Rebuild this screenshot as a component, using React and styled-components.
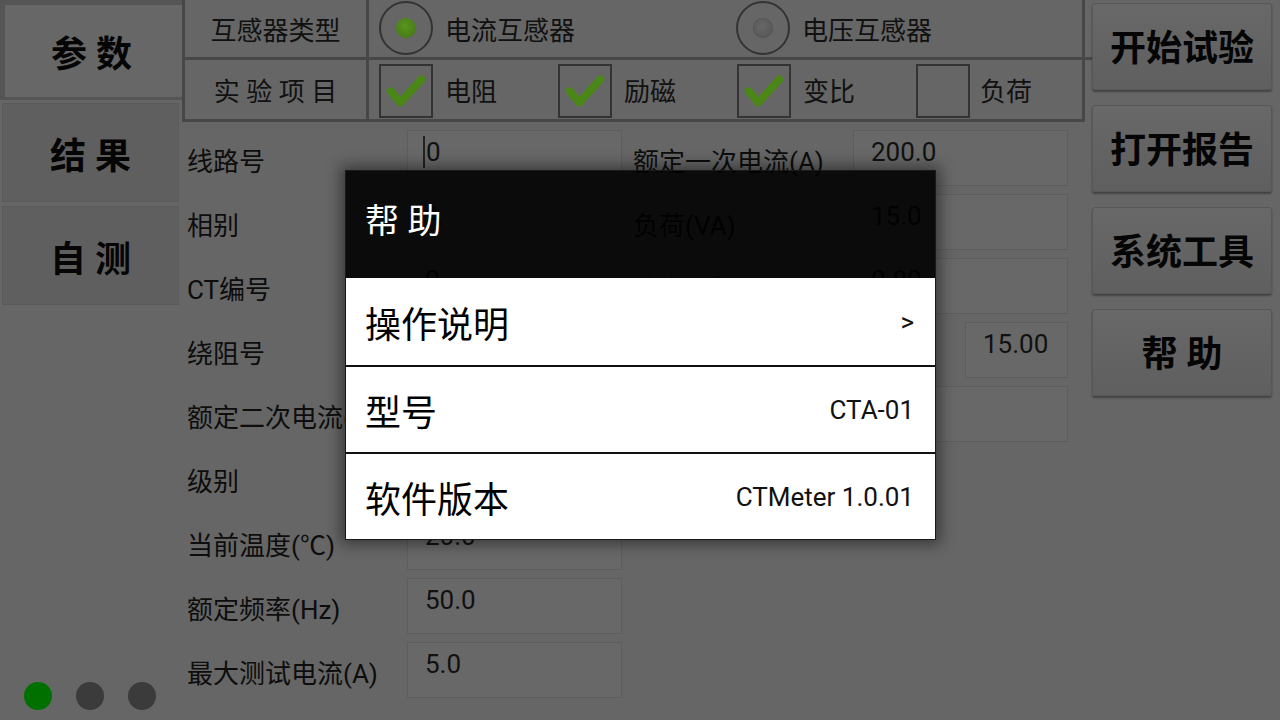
import React from "react";
import styled, { createGlobalStyle } from "styled-components";

const Global = createGlobalStyle`
  html, body { margin: 0; padding: 0; background: #666; }
  body { font-family: Roboto, "Noto Sans CJK SC", sans-serif; }
  * { box-sizing: border-box; }
`;

const Page = styled.div`
  position: relative;
  width: 1280px;
  height: 720px;
  background: #666;
  display: flex;
  overflow: hidden;
  color: #0d0d0d;
`;

const LeftCol = styled.div`
  width: 182px;
  flex: none;
  display: flex;
  flex-direction: column;
`;

const Tab = styled.div`
  display: flex;
  align-items: center;
  justify-content: center;
  font-size: 36px;
  font-weight: 700;
  color: #050505;
  ${(p) =>
    p.$active
      ? `height: 100px; background: #676767; border-top: 5px solid #555; border-left: 5px solid #555; border-bottom: 3px solid #555; padding-right: 4px;`
      : `height: 99px; margin: 3px 3px 1px 2px; background: #5f5f5f; border: 1px solid #5a5a5a;`}
`;

const Dots = styled.div`
  margin-top: auto;
  display: flex;
  gap: 24px;
  padding: 0 0 10px 24px;
`;

const Dot = styled.span`
  width: 28px;
  height: 28px;
  border-radius: 50%;
  background: ${(p) => (p.$on ? "#007000" : "#3b3b3b")};
`;

const Middle = styled.div`
  width: 903px;
  flex: none;
  display: flex;
  flex-direction: column;
`;

const Table = styled.div`
  display: grid;
  grid-template-columns: 184px 1fr;
  grid-template-rows: 60px 59px;
  border-left: 3px solid #474747;
  border-right: 3px solid #474747;
  border-bottom: 3px solid #474747;
`;

const HeadCell = styled.div`
  display: flex;
  align-items: center;
  justify-content: center;
  font-size: 26px;
  color: #111;
  border-right: 3px solid #474747;
  ${(p) => (p.$top ? "border-bottom: 3px solid #474747;" : "")}
`;

const Options = styled.div`
  display: grid;
  grid-template-columns: repeat(${(p) => p.$cols}, ${(p) => p.$w}px);
  align-items: center;
  padding-left: 10px;
  ${(p) => (p.$top ? "border-bottom: 3px solid #474747;" : "")}
`;

const Option = styled.div`
  display: flex;
  align-items: center;
  gap: ${(p) => p.$gap || 12}px;
  font-size: 26px;
  color: #111;
`;

const RadioRing = styled.span`
  width: 54px;
  height: 54px;
  border-radius: 50%;
  border: 2px solid #333;
  display: flex;
  align-items: center;
  justify-content: center;
  margin-top: -1px;
`;

const RadioDot = styled.span`
  width: 20px;
  height: 20px;
  border-radius: 50%;
  background: ${(p) =>
    p.$on
      ? "radial-gradient(circle at 45% 40%, #5a9420, #3f7412)"
      : "radial-gradient(circle at 45% 40%, #666, #555)"};
  ${(p) => (p.$on ? "" : "box-shadow: inset 0 0 2px #4a4a4a;")}
`;

const Box = styled.span`
  width: 54px;
  height: 54px;
  border: 2px solid #333;
  display: flex;
  align-items: center;
  justify-content: center;
  margin-top: 2px;
`;

const Form = styled.div`
  display: grid;
  grid-template-columns: 446px 446px;
  padding: 8px 0 0 5px;
`;

const FormCol = styled.div`
  display: flex;
  flex-direction: column;
  gap: 8px;
`;

const Row = styled.div`
  display: flex;
  height: 56px;
  width: 435px;
`;

const Label = styled.div`
  width: 220px;
  flex: none;
  display: flex;
  align-items: center;
  padding-top: 2px;
  font-size: 26px;
  color: #0d0d0d;
  white-space: nowrap;
`;

const Input = styled.div`
  flex: ${(p) => (p.$narrow ? "none" : "1")};
  width: ${(p) => (p.$narrow ? "103px" : "auto")};
  margin-left: ${(p) => (p.$narrow ? "auto" : "0")};
  background: #686868;
  border: 1px solid #5d5d5d;
  padding: 3px 0 0 17px;
  font-size: 26px;
  line-height: 36px;
  color: #111;
  display: flex;
  align-items: flex-start;
`;

const Caret = styled.span`
  display: inline-block;
  width: 2px;
  height: 32px;
  background: #222;
  margin: 2px 1px 0 -2px;
`;

const RightCol = styled.div`
  flex: 1;
  display: flex;
  flex-direction: column;
  gap: 15px;
  padding: 3px 8px 0 7px;
`;

const SideButton = styled.div`
  height: 87px;
  border-radius: 3px;
  background: linear-gradient(#686868, #5f5f5f);
  border: 1px solid #575757;
  box-shadow: 0 2px 2px rgba(0, 0, 0, 0.35);
  display: flex;
  align-items: center;
  justify-content: center;
  padding-bottom: 3px;
  font-size: 36px;
  font-weight: 700;
  color: #050505;
`;

const Dialog = styled.div`
  position: absolute;
  left: 345px;
  top: 170px;
  width: 591px;
  display: flex;
  flex-direction: column;
  box-shadow: 0 0 14px 4px rgba(0, 0, 0, 0.45);
  border: 1px solid #1a1a1a;
`;

const DialogHead = styled.div`
  height: 107px;
  background: rgba(0, 0, 0, 0.89);
  color: #fff;
  font-size: 34px;
  display: flex;
  align-items: center;
  padding: 0 0 12px 19px;
`;

const Item = styled.div`
  height: 87px;
  background: #fff;
  display: flex;
  align-items: center;
  justify-content: space-between;
  padding: 0 21px 0 19px;
  ${(p) => (p.$sep ? "border-top: 2px solid #111;" : "")}
`;

const ItemLabel = styled.span`
  font-size: 36px;
  color: #000;
`;

const ItemValue = styled.span`
  font-size: 26px;
  color: #111;
`;

const Check = () => (
  <svg width="54" height="54" viewBox="0 0 54 54" style={{ marginLeft: -2 }}>
    <polyline
      points="12,27 22,39 44,15"
      fill="none"
      stroke="#4b8717"
      strokeWidth="8"
      strokeLinecap="round"
      strokeLinejoin="round"
    />
  </svg>
);

const leftRows = [
  ["线路号", "0", true],
  ["相别", "A"],
  ["CT编号", "0"],
  ["绕阻号", "1"],
  ["额定二次电流(A)", "5"],
  ["级别", "0.2"],
  ["当前温度(℃)", "20.0"],
  ["额定频率(Hz)", "50.0"],
  ["最大测试电流(A)", "5.0"],
];

const rightRows = [
  ["额定一次电流(A)", "200.0"],
  ["负荷(VA)", "15.0"],
  ["功率因数", "0.80"],
  ["二次绕组电阻(Ω)", "15.00", true],
  ["备注", ""],
];

export default function App() {
  return (
    <>
      <Global />
      <Page>
        <LeftCol>
          <Tab $active>参 数</Tab>
          <Tab>结 果</Tab>
          <Tab>自 测</Tab>
          <Dots>
            <Dot $on />
            <Dot />
            <Dot />
          </Dots>
        </LeftCol>
        <Middle>
          <Table>
            <HeadCell $top>互感器类型</HeadCell>
            <Options $top $cols={2} $w={357}>
              <Option>
                <RadioRing>
                  <RadioDot $on />
                </RadioRing>
                电流互感器
              </Option>
              <Option>
                <RadioRing>
                  <RadioDot />
                </RadioRing>
                电压互感器
              </Option>
            </Options>
            <HeadCell>实 验 项 目</HeadCell>
            <Options $cols={4} $w={179}>
              <Option>
                <Box>
                  <Check />
                </Box>
                电阻
              </Option>
              <Option>
                <Box>
                  <Check />
                </Box>
                励磁
              </Option>
              <Option>
                <Box>
                  <Check />
                </Box>
                变比
              </Option>
              <Option $gap={10}>
                <Box />
                负荷
              </Option>
            </Options>
          </Table>
          <Form>
            <FormCol>
              {leftRows.map(([l, v, caret]) => (
                <Row key={l}>
                  <Label>{l}</Label>
                  <Input>
                    {caret && <Caret />}
                    {v}
                  </Input>
                </Row>
              ))}
            </FormCol>
            <FormCol>
              {rightRows.map(([l, v, narrow]) => (
                <Row key={l}>
                  <Label>{l}</Label>
                  <Input $narrow={narrow}>{v}</Input>
                </Row>
              ))}
            </FormCol>
          </Form>
        </Middle>
        <RightCol>
          <SideButton>开始试验</SideButton>
          <SideButton>打开报告</SideButton>
          <SideButton>系统工具</SideButton>
          <SideButton>帮 助</SideButton>
        </RightCol>
        <Dialog>
          <DialogHead>帮 助</DialogHead>
          <Item>
            <ItemLabel>操作说明</ItemLabel>
            <ItemValue>&gt;</ItemValue>
          </Item>
          <Item $sep>
            <ItemLabel>型号</ItemLabel>
            <ItemValue>CTA-01</ItemValue>
          </Item>
          <Item $sep>
            <ItemLabel>软件版本</ItemLabel>
            <ItemValue>CTMeter 1.0.01</ItemValue>
          </Item>
        </Dialog>
      </Page>
    </>
  );
}
